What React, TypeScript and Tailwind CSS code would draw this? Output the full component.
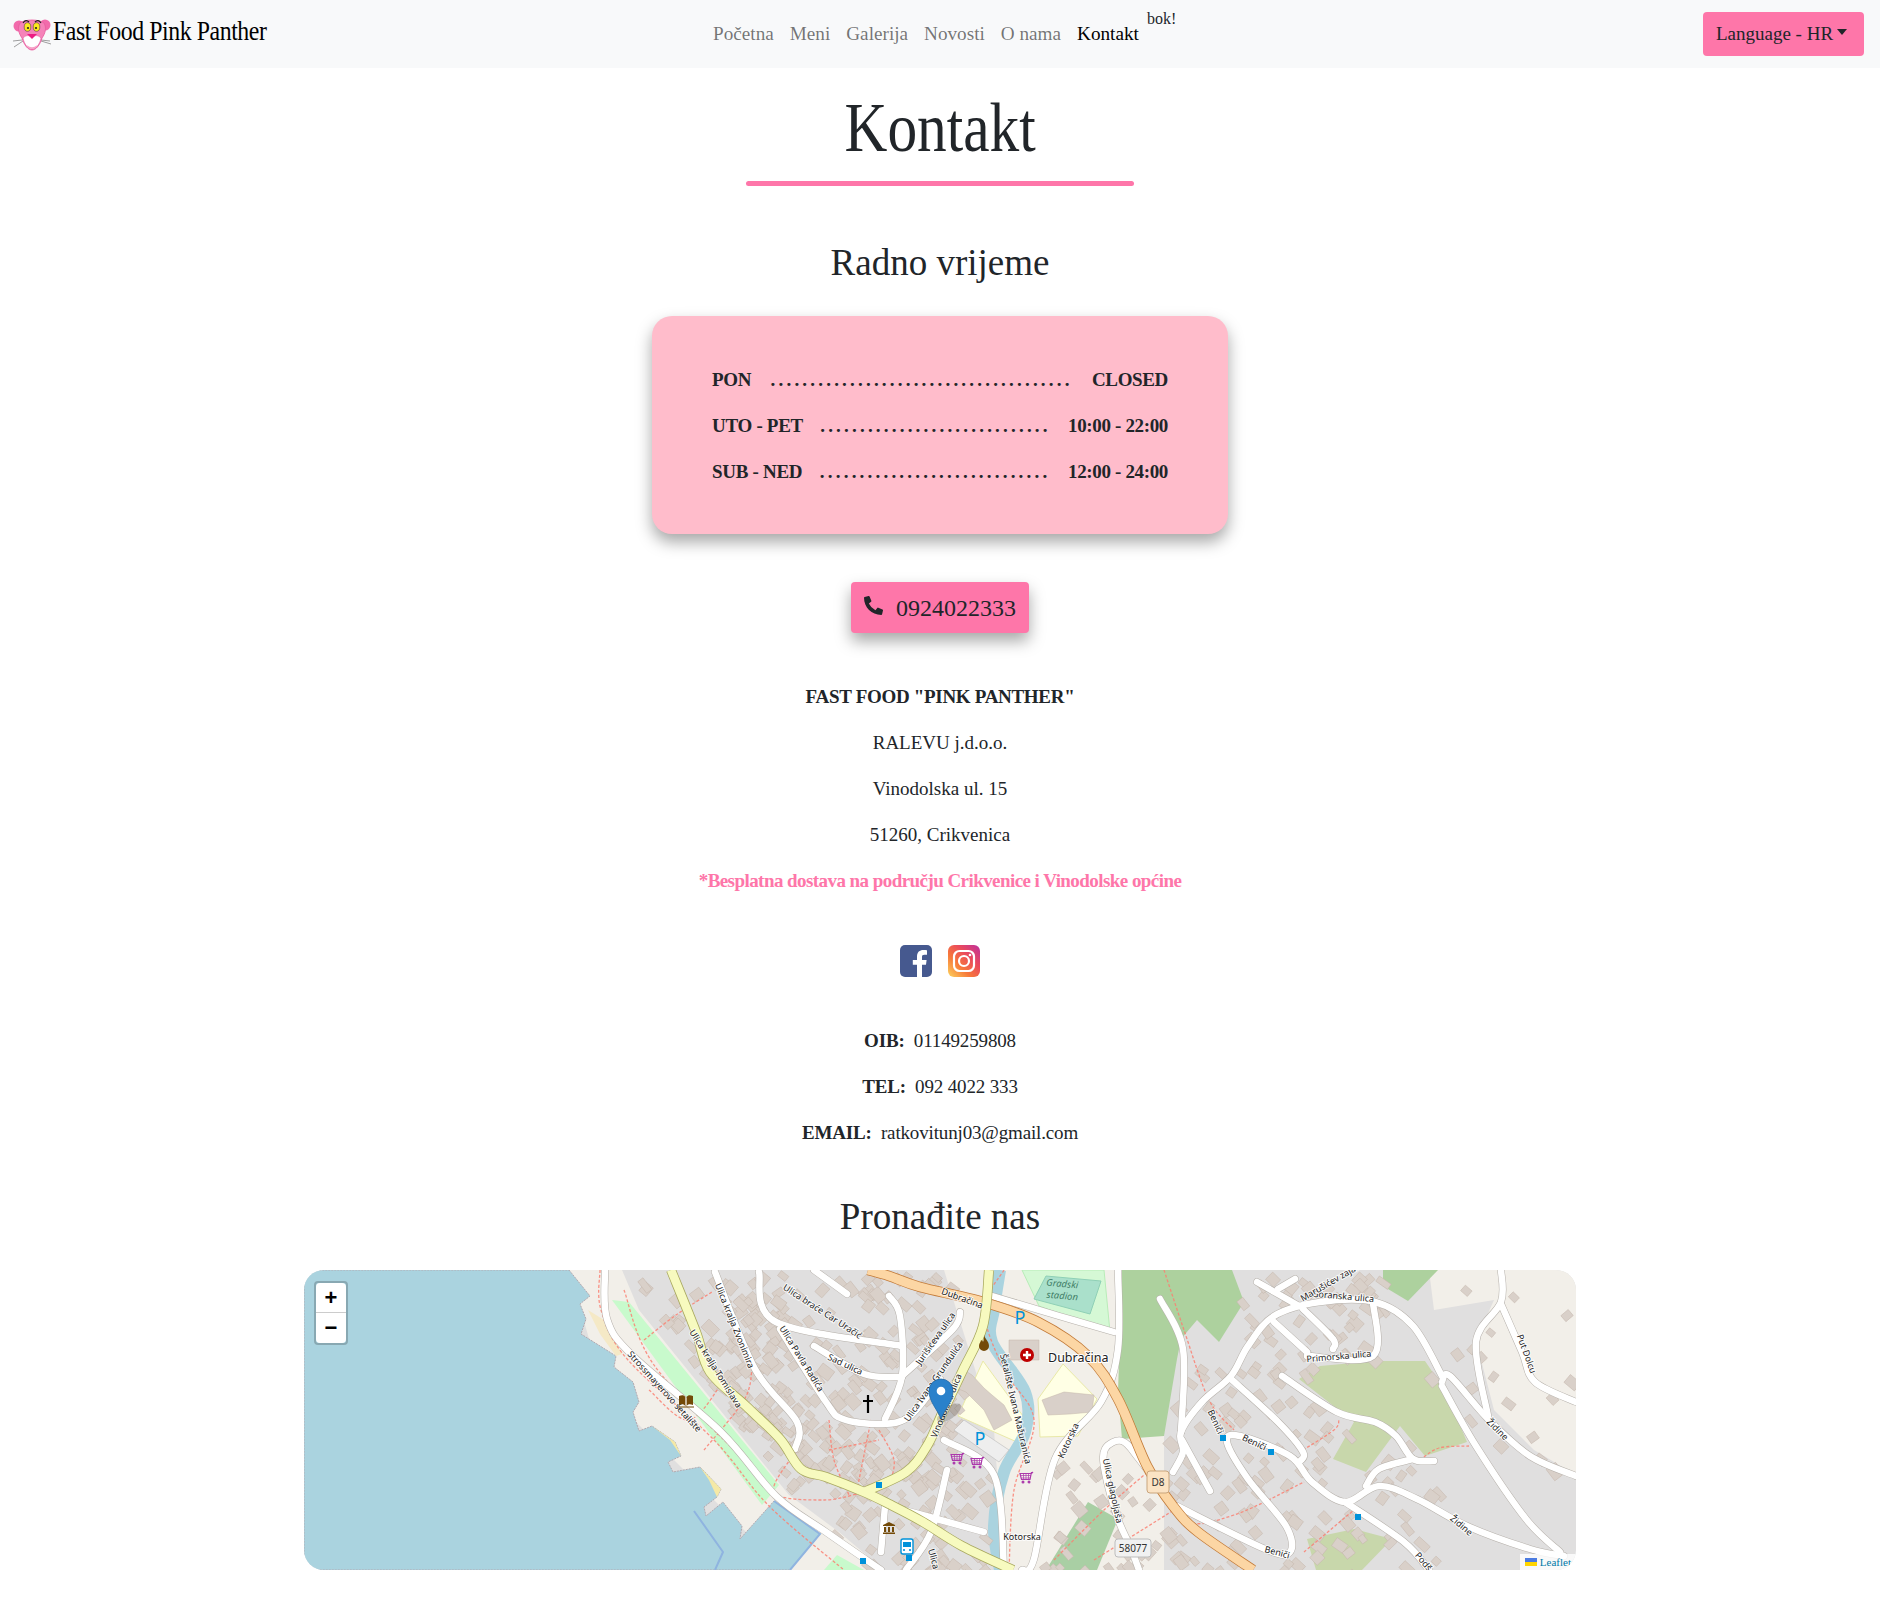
import { FaPhoneAlt } from 'react-icons/fa';

type Pt = [number, number];

const WATER: Pt[] = [[265,0],[286,26],[276,34],[282,49],[277,64],[312,86],[310,97],[329,112],[335,132],[329,142],[335,161],[348,156],[371,172],[377,186],[364,192],[369,202],[396,197],[417,219],[413,227],[400,237],[402,246],[419,232],[438,256],[436,269],[470,231],[516,264],[486,300],[0,300],[0,0]];
const FOREST: Pt[] = [[818,0],[928,0],[940,32],[915,72],[893,50],[877,69],[873,89],[860,166],[818,169],[814,122]];
const SCRUB: Pt[] = [[995,109],[1016,96],[1071,91],[1121,91],[1142,122],[1163,172],[1121,186],[1096,156],[1062,202],[1029,189],[1050,152]];

// white streets
const ROADS: Pt[][] = [
  [[873,236],[961,279],[986,282],[982,256],[944,209],[923,172],[936,166],[986,186],[1008,212],[1041,232],[1075,216],[1113,229],[1163,256],[1226,279],[1260,286]],
  [[1041,232],[1100,272],[1125,300]],
  [[1138,112],[1146,106],[1184,149],[1226,186],[1272,206]],
  [[1138,116],[1172,176],[1222,249],[1256,282]],
  [[1138,106],[1109,56],[1071,32],[1016,32],[970,46],[944,76],[927,106],[898,132],[877,162],[879,182],[869,202]],
  [[927,109],[974,152],[999,182],[995,192]],
  [[978,106],[1033,142],[1071,152],[1092,166],[1109,189],[1130,191]],
  [[1109,189],[1075,199],[1062,216]],
  [[856,29],[879,79],[877,162]],
  [[878,170],[906,221]],
  [[970,52],[1003,82]],
  [[999,39],[1029,69],[1029,79]],
  [[1069,32],[1069,86],[1003,86]],
  [[953,12],[995,36]],
  [[974,19],[991,9]],
  [[1197,0],[1197,32],[1172,72],[1184,146]],
  [[1197,34],[1218,82],[1231,112],[1272,132]],
  [[869,236],[835,189],[818,171],[801,179],[801,202],[814,249],[826,276],[835,300]],
  [[814,0],[814,79],[797,132],[751,189],[730,289],[718,300]],
  [[688,26],[755,46],[810,62]],
  [[301,0],[303,49],[329,86],[417,162],[472,226],[522,262],[577,300]],
  [[411,2],[451,99],[493,152],[491,179]],
  [[455,2],[472,52],[598,76]],
  [[585,26],[596,46],[598,106],[581,149]],
  [[510,76],[560,104],[598,107]],
  [[476,59],[522,132],[539,149],[577,154],[606,146],[636,109]],
  [[598,106],[649,59],[656,42]],
  [[510,0],[543,24]],
  [[581,236],[577,282]],
  [[643,200],[627,262],[602,300]],
  [[640,170],[690,205],[700,300]],
  [[600,240],[680,262]],
];

const FOOTWAYS: Pt[][] = [
  [[296,0],[297,40],[324,90],[410,170],[465,236],[540,300]],
  [[320,20],[350,95],[440,190],[470,222]],
  [[340,70],[372,45],[408,22]],
  [[345,120],[385,150],[420,110]],
  [[400,180],[440,130],[448,100]],
  [[493,180],[470,222],[520,230],[560,222]],
  [[525,150],[530,190],[545,225]],
  [[567,150],[552,225]],
  [[575,160],[590,190],[585,215]],
  [[525,180],[575,170]],
  [[700,0],[680,40],[700,100],[730,150],[710,220],[705,300]],
  [[860,0],[880,60],[905,130],[930,160]],
  [[750,290],[800,240],[846,200]],
  [[843,196],[880,250],[930,245],[1000,212]],
  [[1000,282],[1050,240]],
  [[999,180],[1030,160],[1035,150]],
  [[1116,190],[1135,178],[1165,176]],
  [[790,290],[870,240]],
];

function smooth(pts: Pt[]) {
  let d = `M${pts[0][0]} ${pts[0][1]}`;
  for (let i = 0; i < pts.length - 1; i++) {
    const p0 = pts[Math.max(i - 1, 0)];
    const p1 = pts[i];
    const p2 = pts[i + 1];
    const p3 = pts[Math.min(i + 2, pts.length - 1)];
    d += ` C${p1[0] + (p2[0] - p0[0]) / 6} ${p1[1] + (p2[1] - p0[1]) / 6} ${p2[0] - (p3[0] - p1[0]) / 6} ${p2[1] - (p3[1] - p1[1]) / 6} ${p2[0]} ${p2[1]}`;
  }
  return d;
}

const poly = (pts: Pt[]) => pts.map((p) => p.join(',')).join(' ');

function inside(x: number, y: number, pts: Pt[]) {
  let hit = false;
  for (let i = 0, j = pts.length - 1; i < pts.length; j = i++) {
    const [xi, yi] = pts[i];
    const [xj, yj] = pts[j];
    if (yi > y !== yj > y && x < ((xj - xi) * (y - yi)) / (yj - yi) + xi) hit = !hit;
  }
  return hit;
}

function makeBuildings() {
  let seed = 77;
  const rnd = () => {
    seed = (seed * 1664525 + 1013904223) % 4294967296;
    return seed / 4294967296;
  };
  const areas: [number, number, number, number, number][] = [
    [330, 0, 480, 170, 110],
    [410, 0, 660, 220, 240],
    [520, 160, 640, 300, 60],
    [610, 170, 690, 300, 30],
    [740, 190, 880, 300, 40],
    [860, 90, 1140, 300, 130],
    [930, 0, 1080, 90, 50],
    [1140, 0, 1272, 200, 18],
  ];
  const out: { x: number; y: number; w: number; h: number; r: number }[] = [];
  for (const [x0, y0, x1, y1, n] of areas) {
    for (let i = 0; i < n; i++) {
      const x = x0 + rnd() * (x1 - x0);
      const y = y0 + rnd() * (y1 - y0);
      const w = 7 + rnd() * 8;
      const h = 6 + rnd() * 6;
      const r = 35 + rnd() * 20;
      // keep the seafront and the park strip free of houses
      if (x < 345 + (y - 30) * 0.78) continue;
      if (inside(x, y, WATER) || inside(x, y, FOREST) || inside(x, y, SCRUB)) continue;
      out.push({ x, y, w, h, r });
    }
  }
  return out;
}

const BUILDINGS = makeBuildings();

const LABELS: [string, number, number, number][] = [
  ['Ulica kralja Tomislava', 411, 99, 58],
  ['Ulica kralja Zvonimira', 430, 56, 68],
  ['Ulica braće Car Uračić', 518, 42, 33],
  ['Ulica Pavla Radića', 497, 89, 58],
  ['Sad ulica', 541, 95, 25],
  ['Strossmayerovo šetalište', 360, 122, 48],
  ['Jurišićeva ulica', 632, 69, -55],
  ['Ulica Ivana Grundulića', 630, 112, -55],
  ['Vinodolska ulica', 643, 136, -68],
  ['Dubračina', 658, 29, 20],
  ['Šetalište Ivana Mažuranića', 711, 139, 77],
  ['Kotorska', 765, 171, -65],
  ['Kotorska', 718, 268, 0],
  ['Ulica glagoljaša', 808, 221, 78],
  ['Beniči', 911, 152, 65],
  ['Beniči', 950, 173, 25],
  ['Beniči', 973, 283, 15],
  ['Primorska ulica', 1035, 87, -5],
  ['Goranska ulica', 1039, 27, 5],
  ['Marušićev zajam', 1028, 12, -30],
  ['Put Dolcu', 1222, 84, 70],
  ['Židine', 1193, 160, 45],
  ['Židine', 1157, 256, 40],
  ['Podš', 1119, 292, 50],
  ['Ulica', 629, 289, 75],
];

function Basket({ x, y }: { x: number; y: number }) {
  return (
    <g transform={`translate(${x} ${y})`} fill="none" stroke="#ac39ac" strokeWidth="1.2">
      <path d="M7 -6l-1.5 1.5H-6l1.5 6H4l1.5-7.5" />
      <path d="M-5 -2.5h10M-4.5 0h9M-2.5 -4.5v6M0 -4.5v6M2.5 -4.5v6" strokeWidth="0.7" />
      <circle cx="-3" cy="4" r="0.9" fill="#ac39ac" />
      <circle cx="3" cy="4" r="0.9" fill="#ac39ac" />
    </g>
  );
}

function MapDrawing() {
  return (
    <svg viewBox="0 0 1272 300" className="block w-full h-full">
      <rect width="1272" height="300" fill="#e0dfdf" />
      {/* land use */}
      <polygon points="265,0 318,0 335,40 485,225 535,262 580,300 480,300 300,120" fill="#f2efe9" />
      <polygon points="640,0 860,0 860,300 700,300 690,160" fill="#f2efe9" />
      <polygon points="1125,0 1272,0 1272,205 1230,180 1190,140 1172,70 1190,30 1130,40" fill="#f2efe9" />
      <polygon points={poly(FOREST)} fill="#add19e" />
      <polygon points="1079,0 1134,0 1104,31 1079,16" fill="#add19e" />
      <polygon points={poly(SCRUB)} fill="#c8d7ab" />
      <polygon points="1003,269 1050,259 1088,269 1058,300 1012,300" fill="#c8d7ab" />
      <polygon points="742,300 784,232 814,249 793,300" fill="#a9cfa4" />
      <polygon points="679,91 719,146 713,172 654,146" fill="#ffffe5" stroke="#e9e9a8" />
      <polygon points="734,129 759,94 793,129 774,166 736,167" fill="#ffffe5" stroke="#e9e9a8" />
      <polygon points="718,0 800,0 806,62 735,36" fill="#d5f8d5" stroke="#b8ecb8" />
      <polygon points="742,6 797,11 786,44 730,29" fill="#aae0cb" stroke="#8fd0b6" />
      <polygon points="308,30 325,32 475,215 458,235" fill="#c8facc" />
      <polygon points="533,285 560,300 520,300" fill="#c8facc" />
      <polygon points={poly(WATER)} fill="#aad3df" stroke="#b3a9b0" strokeDasharray="2 1" strokeWidth="1" />
      <polyline points="390,241 419,282 411,300" fill="none" stroke="#8fb4e0" strokeWidth="2" />
      <polyline points="470,231 516,264 486,300" fill="none" stroke="#8fb4e0" strokeWidth="2" />
      <polygon points="300,50 284,40 296,64 312,86 318,84" fill="#f5e9c6" />
      <polygon points="348,156 371,172 377,186 366,170" fill="#f5e9a6" />
      <polygon points="396,197 417,219 413,227 405,210" fill="#f5e9a6" />
      {/* river */}
      <path d={smooth([[696,0],[690,39],[688,72],[721,122],[721,162],[700,202],[690,256],[696,300]])} fill="none" stroke="#aad3df" strokeWidth="12" />
      {/* buildings */}
      {BUILDINGS.map((b, i) => (
        <rect key={i} x={b.x} y={b.y} width={b.w} height={b.h} fill="#d9d0c9" stroke="#c4b6ab" strokeWidth="0.5" transform={`rotate(${b.r} ${b.x} ${b.y})`} />
      ))}
      <polygon points="660,100 668,105 680,118 688,125 700,135 708,150 690,160 680,140 662,122 652,118" fill="#d9d0c9" stroke="#c4b6ab" strokeWidth="0.5" />
      <polygon points="738,130 760,122 790,125 788,142 766,144 744,145" fill="#d9d0c9" stroke="#c4b6ab" strokeWidth="0.5" />
      <polygon points="705,70 735,70 735,90 705,90" fill="#d9d0c9" stroke="#c4b6ab" strokeWidth="0.5" />
      <polygon points="660,150 705,180 695,192 650,160" fill="#eeeeee" stroke="#bbb" strokeWidth="0.6" />
      {/* footways */}
      {FOOTWAYS.map((pts, i) => (
        <path key={i} d={smooth(pts)} fill="none" stroke="#fa8072" strokeWidth="1.3" strokeDasharray="3 2" opacity="0.85" />
      ))}
      {/* streets */}
      {ROADS.map((pts, i) => (
        <path key={i} d={smooth(pts)} fill="none" stroke="#b5b0aa" strokeWidth="7.5" strokeLinecap="round" />
      ))}
      {ROADS.map((pts, i) => (
        <path key={i} d={smooth(pts)} fill="none" stroke="#ffffff" strokeWidth="6.5" strokeLinecap="round" />
      ))}
      {/* trunk and secondary */}
      <path d={smooth([[564,0],[585,6],[616,17],[679,32],[734,52],[784,86],[814,129],[843,196],[869,236],[894,262],[949,300]])} fill="none" stroke="#c27a38" strokeWidth="10.5" />
      <path d={smooth([[564,0],[585,6],[616,17],[679,32],[734,52],[784,86],[814,129],[843,196],[869,236],[894,262],[949,300]])} fill="none" stroke="#fcd6a4" strokeWidth="9" />
      <path d={smooth([[367,0],[392,62],[406,102],[442,136],[476,169],[497,199],[522,207],[560,222],[585,234],[619,252],[658,276],[709,300]])} fill="none" stroke="#a8a85e" strokeWidth="10" />
      <path d={smooth([[560,222],[602,202],[623,176],[637,146],[658,102],[679,56],[685,0]])} fill="none" stroke="#a8a85e" strokeWidth="10" />
      <path d={smooth([[367,0],[392,62],[406,102],[442,136],[476,169],[497,199],[522,207],[560,222],[585,234],[619,252],[658,276],[709,300]])} fill="none" stroke="#f7fabf" strokeWidth="8.5" />
      <path d={smooth([[560,222],[602,202],[623,176],[637,146],[658,102],[679,56],[685,0]])} fill="none" stroke="#f7fabf" strokeWidth="8.5" />
      {/* labels */}
      {LABELS.map(([t, x, y, r], i) => (
        <text key={i} x={x} y={y} transform={`rotate(${r} ${x} ${y})`} textAnchor="middle" dominantBaseline="middle" fontFamily='"Noto Sans", sans-serif' fontSize="9" fill="#222" stroke="#ffffff" strokeWidth="2" paintOrder="stroke" strokeOpacity="0.8">
          {t}
        </text>
      ))}
      <text x="758" y="17" textAnchor="middle" fontFamily='"Noto Sans", sans-serif' fontSize="9.5" fontStyle="italic" fill="#3f7d66" transform="rotate(5 758 17)">Gradski</text>
      <text x="758" y="29" textAnchor="middle" fontFamily='"Noto Sans", sans-serif' fontSize="9.5" fontStyle="italic" fill="#3f7d66" transform="rotate(5 758 29)">stadion</text>
      <text x="744" y="92" fontFamily='"Noto Sans", sans-serif' fontSize="12.5" fill="#222" stroke="#fff" strokeWidth="2" paintOrder="stroke">Dubračina</text>
      {/* pois */}
      <circle cx="723" cy="85" r="7" fill="#bf0000" />
      <path d="M723 81v8M719 85h8" stroke="#fff" strokeWidth="2.4" />
      <text x="716" y="54" textAnchor="middle" fontFamily='"Noto Sans", sans-serif' fontSize="18" fill="#0092da">P</text>
      <text x="676" y="175" textAnchor="middle" fontFamily='"Noto Sans", sans-serif' fontSize="18" fill="#0092da">P</text>
      <Basket x={653} y={189} />
      <Basket x={673} y={193} />
      <Basket x={722} y={208} />
      <path d="M680 65c1 4 5 6 5 11a5 5 0 0 1-10 0c0-3 2-4 2-6 1 1 2 1 2 2 1-2 1-5 1-7z" fill="#734a08" />
      {[[919,168],[967,182],[1054,247],[575,215],[559,291],[605,288]].map(([x, y], i) => (
        <rect key={i} x={x - 3} y={y - 3} width="6" height="6" fill="#0092da" />
      ))}
      <path d="M564 125v18M559 131h10" stroke="#000" strokeWidth="2.2" />
      <g transform="translate(382 131)" fill="#734a08">
        <path d="M-7 -5c3-1 5-1 6.400 1v9c-1.400-2-3.400-2-6.400-1zM7 -5c-3-1-5-1-6.400 1v9c1.400-2 3.400-2 6.400-1z" />
        <path d="M-8 6h16" stroke="#734a08" strokeWidth="1" />
      </g>
      <g transform="translate(585 258)" fill="#734a08">
        <path d="M-6 -3L0 -6l6 3v1h-12zM-5 -1h2v5h-2zM-1 -1h2v5h-2zM3 -1h2v5h-2zM-6 4.500h12v1.500h-12z" />
      </g>
      <g transform="translate(603 276)">
        <rect x="-6" y="-7" width="12" height="15" rx="2" fill="#fff" stroke="#0092da" strokeWidth="1.4" />
        <rect x="-4" y="-4" width="8" height="5" fill="#0092da" />
        <circle cx="-3" cy="4" r="1.100" fill="#0092da" />
        <circle cx="3" cy="4" r="1.100" fill="#0092da" />
      </g>
      {/* road shields */}
      <rect x="843" y="201" width="22" height="22" rx="3" fill="#fbe3c4" stroke="#c9a57d" />
      <text x="854" y="216" textAnchor="middle" fontFamily='"Noto Sans", sans-serif' fontSize="10" fill="#333">D8</text>
      <rect x="811" y="269" width="36" height="18" rx="3" fill="#f1f1f1" stroke="#bdbdbd" />
      <text x="829" y="282" textAnchor="middle" fontFamily='"Noto Sans", sans-serif' fontSize="10" fill="#333">58077</text>
      {/* marker */}
      <ellipse cx="645" cy="143" rx="14" ry="6" fill="#000" opacity="0.18" transform="rotate(-35 645 143)" />
      <path d="M637 149c-3-9-12-17-12-28a12 12 0 0 1 24 0c0 11-9 19-12 28z" fill="#2a81cb" stroke="#2168a6" strokeWidth="0.8" />
      <circle cx="637" cy="121" r="4.300" fill="#fff" />
    </svg>
  );
}

function PantherLogo() {
  return (
    <svg viewBox="0 0 40 34" className="w-[40px] h-[34px] shrink-0">
      <path d="M2 30L11 24M1 24l9-1M38 24l-9-1M39 27l-10-3" stroke="#777" strokeWidth="0.7" />
      <circle cx="7" cy="9" r="5.500" fill="#f26bab" />
      <circle cx="33" cy="8" r="5.500" fill="#f26bab" />
      <path d="M8 6c5-4 19-4 24 0 3 5 1 11-2 15-2 7-6 12-10 12s-8-5-10-12C7 17 5 11 8 6z" fill="#f583b9" stroke="#e85a9d" strokeWidth="0.8" />
      <path d="M11 21c3-3 6-3 9-1 3-2 6-2 9 1-1 6-5 11-9 11s-8-5-9-11z" fill="#fff" stroke="#e85a9d" strokeWidth="0.6" />
      <ellipse cx="15.500" cy="10" rx="3.300" ry="4.300" fill="#fbe91e" stroke="#333" strokeWidth="0.5" />
      <ellipse cx="24.500" cy="10" rx="3.300" ry="4.300" fill="#fbe91e" stroke="#333" strokeWidth="0.5" />
      <circle cx="16" cy="11" r="1.100" fill="#222" />
      <circle cx="24" cy="11" r="1.100" fill="#222" />
      <path d="M11 6c2-3 4-3 6-1M29 6c-2-3-4-3-6-1" stroke="#222" strokeWidth="1.300" fill="none" />
      <path d="M15 17h10l-5 5z" fill="#ec1c83" />
      <path d="M15 28c3 3 7 3 10 0-1 3-3 4-5 4s-4-1-5-4z" fill="#f7a3c8" />
    </svg>
  );
}

function FacebookIcon() {
  return (
    <svg viewBox="0 0 32 32" className="w-[32px] h-[32px]">
      <rect width="32" height="32" rx="5" fill="#46598f" />
      <path d="M22 32V19.800h4l.6-4.800H22v-3c0-1.400.4-2.300 2.400-2.300H27V5.300C26.500 5.200 25 5 23.300 5 19.700 5 17 7.200 17 11.400V15h-4.200v4.800H17V32z" fill="#fff" />
    </svg>
  );
}

function InstagramIcon() {
  return (
    <svg viewBox="0 0 32 32" className="w-[32px] h-[32px]">
      <defs>
        <linearGradient id="ig" x1="0" y1="1" x2="1" y2="0">
          <stop offset="0" stopColor="#fdd45e" />
          <stop offset="0.35" stopColor="#f77a3a" />
          <stop offset="0.65" stopColor="#ea4a5c" />
          <stop offset="1" stopColor="#bd2f9e" />
        </linearGradient>
      </defs>
      <rect width="32" height="32" rx="6" fill="url(#ig)" />
      <rect x="6" y="6" width="20" height="20" rx="5.500" fill="none" stroke="#fff" strokeWidth="2.200" />
      <circle cx="16" cy="16" r="5" fill="none" stroke="#fff" strokeWidth="2.200" />
      <circle cx="22" cy="10" r="1.300" fill="#fff" />
    </svg>
  );
}

function HoursRow({ day, time, dots }: { day: string; time: string; dots: number }) {
  return (
    <div className="flex items-baseline justify-between h-[46px] leading-[46px] font-bold">
      <span className="tracking-[-0.3px]">{day}</span>
      <span className="tracking-[3.2px]">{'.'.repeat(dots)}</span>
      <span className="tracking-[-0.35px]">{time}</span>
    </div>
  );
}

const NAV = ['Početna', 'Meni', 'Galerija', 'Novosti', 'O nama'];

export default function App() {
  return (
    <div className="min-h-[1600px] bg-white text-[#212529] font-['Liberation_Serif',serif] text-[19px]">
      <nav className="h-[68px] bg-[#f8f9fa] flex items-center pl-3 pr-4">
        <a className="flex items-center w-[701px] text-black">
          <PantherLogo />
          <span className="text-[28px] tracking-[-0.5px] ml-[1px] -mt-[6px] scale-x-[0.85] origin-left whitespace-nowrap">Fast Food Pink Panther</span>
        </a>
        <ul className="flex items-center gap-4 text-[19.2px]">
          {NAV.map((item) => (
            <li key={item} className="text-black/55">{item}</li>
          ))}
          <li className="text-black">Kontakt</li>
          <li className="-ml-2 -mt-[30px] text-[16px]">bok!</li>
        </ul>
        <button className="ml-auto h-[44px] w-[161px] bg-[#fe76a9] rounded flex items-center justify-center gap-1 pr-1">
          Language - HR
          <span className="w-0 h-0 border-x-[5px] border-x-transparent border-t-[6px] border-t-[#212529] -mt-1" />
        </button>
      </nav>

      <main className="flex flex-col items-center text-center">
        <h1 className="mt-[20px] text-[69px] leading-[80px] scale-x-[0.86]">Kontakt</h1>
        <div className="mt-[13px] w-[388px] h-[5px] rounded bg-[#fe76a9]" />

        <h2 className="mt-[52px] text-[37px] leading-[50px]">Radno vrijeme</h2>
        <div className="mt-[28px] w-[576px] h-[218px] rounded-[20px] bg-[#ffbccb] shadow-[0_8px_16px_rgba(0,0,0,0.35)] px-[60px] pt-[41px] text-left">
          <HoursRow day="PON" time="CLOSED" dots={38} />
          <HoursRow day="UTO - PET" time="10:00 - 22:00" dots={29} />
          <HoursRow day="SUB - NED" time="12:00 - 24:00" dots={29} />
        </div>

        <a className="mt-[48px] w-[178px] h-[51px] rounded bg-[#fe76a9] shadow-[0_8px_16px_rgba(0,0,0,0.35)] flex items-center justify-center gap-[13px] text-[24px]">
          <FaPhoneAlt className="w-[19px] h-[19px] -mt-1" />
          0924022333
        </a>

        <div className="mt-[41px] leading-[46px]">
          <p className="font-bold tracking-[-0.3px]">FAST FOOD "PINK PANTHER"</p>
          <p>RALEVU j.d.o.o.</p>
          <p>Vinodolska ul. 15</p>
          <p>51260, Crikvenica</p>
          <p className="font-bold text-[#fe76a9] tracking-[-0.56px]">*Besplatna dostava na području Crikvenice i Vinodolske općine</p>
        </div>

        <div className="mt-[41px] flex gap-[16px]">
          <FacebookIcon />
          <InstagramIcon />
        </div>

        <div className="mt-[41px] leading-[46px] tracking-[-0.15px]">
          <p><b>OIB:</b>&nbsp; 01149259808</p>
          <p><b>TEL:</b>&nbsp; 092 4022 333</p>
          <p><b>EMAIL:</b>&nbsp; ratkovitunj03@gmail.com</p>
        </div>

        <h2 className="mt-[36px] text-[37px] leading-[50px]">Pronađite nas</h2>
        <div className="relative mt-[28px] w-[1272px] h-[300px] rounded-[20px] overflow-hidden">
          <MapDrawing />
          <div className="absolute left-[10px] top-[11px] w-[34px] rounded border-2 border-black/20 font-['Liberation_Sans',sans-serif] text-[22px] font-bold text-black">
            <div className="h-[30px] bg-white rounded-t-sm border-b border-[#ccc] leading-[30px]">+</div>
            <div className="h-[30px] bg-white rounded-b-sm leading-[30px]">−</div>
          </div>
          <div className="absolute right-0 bottom-0 h-[16px] px-[5px] bg-white/80 flex items-center gap-[3px] text-[11px] text-[#0078a8]">
            <span className="w-[12px] h-[8px] flex flex-col">
              <span className="h-1/2 bg-[#4c7be1]" />
              <span className="h-1/2 bg-[#ffd500]" />
            </span>
            Leaflet
          </div>
        </div>
      </main>
    </div>
  );
}
